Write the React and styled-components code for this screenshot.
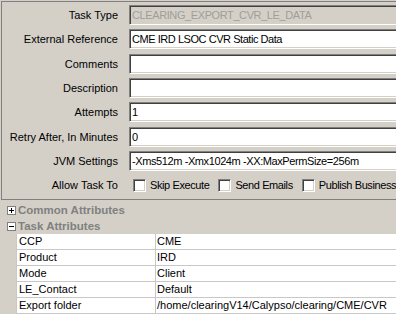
import React from 'react';
import styled, { createGlobalStyle } from 'styled-components';

const GlobalStyle = createGlobalStyle`
  html, body {
    margin: 0;
    padding: 0;
    background: #d4d0c8;
  }
`;

const Root = styled.div`
  width: 396px;
  height: 314px;
  overflow: hidden;
  background: #d4d0c8;
  font-family: "Liberation Sans", Arial, sans-serif;
  font-size: 11px;
  color: #000;
`;

const FormPanel = styled.div`
  margin: 1px 0 0 1px;
  border-left: 1px solid #808080;
  border-top: 1px solid #808080;
  border-bottom: 1px solid #808080;
  padding: 3px 0 4px;
  display: grid;
  grid-template-columns: 116px 1fr;
  column-gap: 11px;
  row-gap: 4.33px;
  grid-auto-rows: 20px;
  align-items: center;
`;

const Label = styled.div`
  text-align: right;
  white-space: nowrap;
`;

const Field = styled.div`
  box-sizing: border-box;
  height: 20px;
  margin-right: -12px;
  border: 1px solid;
  border-color: #808080 #fff #fff #808080;
  box-shadow: inset 1px 1px #404040, inset -1px -1px #d4d0c8;
  background: ${p => (p.disabled ? '#d4d0c8' : '#fff')};
  color: ${p => (p.disabled ? '#a09e98' : '#000')};
  padding: 0 0 0 2px;
  line-height: 18px;
  white-space: nowrap;
  overflow: hidden;
  letter-spacing: ${p => p.$tight || '0'};
`;

const CheckRow = styled.div`
  display: flex;
  align-items: center;
  padding-left: 4px;
  white-space: nowrap;
  letter-spacing: -0.4px;
`;

const CheckItem = styled.label`
  display: flex;
  align-items: center;
  gap: 4px;
  margin-right: 9px;
`;

const CheckBox = styled.span`
  box-sizing: border-box;
  flex: none;
  width: 13px;
  height: 13px;
  border: 1px solid;
  border-color: #808080 #fff #fff #808080;
  box-shadow: inset 1px 1px #404040, inset -1px -1px #d4d0c8;
  background: #fff;
`;

const Tree = styled.div`
  padding-top: 2px;
`;

const GroupHeader = styled.div`
  height: 16px;
  display: flex;
  align-items: center;
  gap: 2px;
  padding-left: 7px;
  font-weight: bold;
  font-size: 11.5px;
  color: #808080;
  white-space: nowrap;
`;

const Table = styled.div`
  margin-left: 16px;
  border-left: 1px solid #c8c8c8;
  background: #fff;
`;

const TableRow = styled.div`
  box-sizing: border-box;
  height: 16px;
  display: grid;
  grid-template-columns: 139px 1fr;
  border-bottom: 1px solid #c8c8c8;
  line-height: 15px;
`;

const Cell = styled.div`
  box-sizing: border-box;
  padding-left: ${p => (p.$value ? '1px' : '2px')};
  border-right: ${p => (p.$value ? 'none' : '1px solid #c8c8c8')};
  white-space: nowrap;
  overflow: hidden;
`;

const Toggle = ({ open }) => (
  <svg width="9" height="9" viewBox="0 0 9 9" style={{ flex: 'none' }}>
    <rect x="0.5" y="0.5" width="8" height="8" fill="#fff" stroke="#808080" />
    <line x1="2" y1="4.5" x2="7" y2="4.5" stroke="#000" />
    {!open && <line x1="4.5" y1="2" x2="4.5" y2="7" stroke="#000" />}
  </svg>
);

const fields = [
  { label: 'Task Type', value: 'CLEARING_EXPORT_CVR_LE_DATA', disabled: true, tight: '-0.4px' },
  { label: 'External Reference', value: 'CME IRD LSOC CVR Static Data', tight: '-0.45px' },
  { label: 'Comments', value: '' },
  { label: 'Description', value: '' },
  { label: 'Attempts', value: '1' },
  { label: 'Retry After, In Minutes', value: '0' },
  { label: 'JVM Settings', value: '-Xms512m -Xmx1024m -XX:MaxPermSize=256m', tight: '-0.4px' },
];

const attributes = [
  ['CCP', 'CME'],
  ['Product', 'IRD'],
  ['Mode', 'Client'],
  ['LE_Contact', 'Default'],
  ['Export folder', '/home/clearingV14/Calypso/clearing/CME/CVR'],
];

export default function App() {
  return (
    <Root>
      <GlobalStyle />
      <FormPanel>
        {fields.map(f => (
          <React.Fragment key={f.label}>
            <Label>{f.label}</Label>
            <Field disabled={f.disabled} $tight={f.tight}>{f.value}</Field>
          </React.Fragment>
        ))}
        <Label>Allow Task To</Label>
        <CheckRow>
          <CheckItem><CheckBox />Skip Execute</CheckItem>
          <CheckItem><CheckBox />Send Emails</CheckItem>
          <CheckItem><CheckBox />Publish Business</CheckItem>
        </CheckRow>
      </FormPanel>
      <Tree>
        <GroupHeader><Toggle />Common Attributes</GroupHeader>
        <GroupHeader><Toggle open />Task Attributes</GroupHeader>
        <Table>
          {attributes.map(([k, v]) => (
            <TableRow key={k}>
              <Cell>{k}</Cell>
              <Cell $value>{v}</Cell>
            </TableRow>
          ))}
        </Table>
      </Tree>
    </Root>
  );
}
